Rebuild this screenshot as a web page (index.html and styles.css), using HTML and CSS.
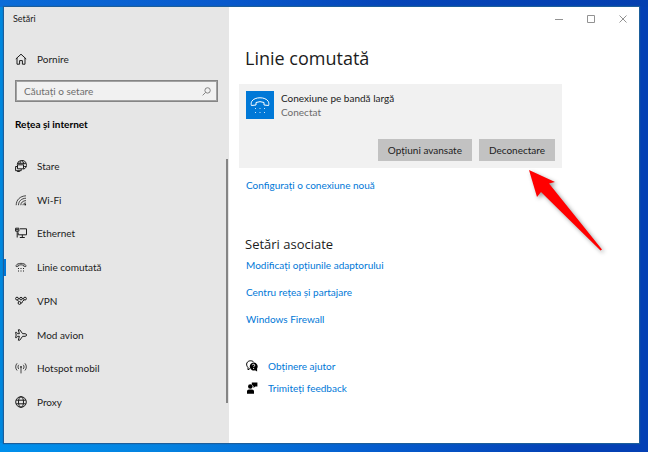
FILE: index.html
```
<!DOCTYPE html>
<html lang="ro">
<head>
<meta charset="utf-8">
<meta name="viewport" content="width=device-width, initial-scale=1">
<title>Setări</title>
<link rel="stylesheet" href="styles.css">
</head>
<body>
<div class="window">
  <aside class="sidebar">
    <div class="app-title">Setări</div>
    <a class="home" href="#">
      <svg class="icon" viewBox="0 0 12 12"><path d="M.8 6 6 1.2 11.2 6M2 5v6.2h2.6V7.6h2.8v3.6H10V5"/></svg>
      <span>Pornire</span>
    </a>
    <form class="search">
      <input type="text" aria-label="Căutați o setare" placeholder="Căutați o setare">
      <button type="submit" aria-label="Căutare"><svg class="search-icon" viewBox="0 0 10 10"><circle cx="6.2" cy="3.8" r="3"/><path d="M4 6 .7 9.3"/></svg></button>
    </form>
    <h2 class="section">Rețea și internet</h2>
    <div class="scroller">
      <nav class="nav">
        <a href="#"><svg class="icon" viewBox="0 0 12 12"><path d="M2.200 4.600A4.600 4.600 0 1 1 8.600 9.200M2.600 3.300h8.300M5 3.200C5.400 1.800 6 .8 6.700.6M8.800 4.500C8.600 2.500 7.900 1 6.700.6M9.200 6.500h1.900"/><path d="M2.500 4.800h6v4h-6zM.6 6.500v4.200h5.600V9M2.200 11.500h2.600M.6 6.500h1.900"/></svg><span>Stare</span></a>
        <a href="#"><svg class="icon thin" viewBox="0 0 12 12"><path d="M1.200 11.200C1.200 6 5 2 11 1.800M3.500 11.200C3.500 7.200 6.500 4.400 11 4.200M5.800 11.200C5.800 8.500 8 6.700 11 6.600M8 11.200C8 9.900 9.200 9 11 9"/><circle class="solid" cx="10.200" cy="10.600" r=".9"/></svg><span>Wi-Fi</span></a>
        <a href="#"><svg class="icon" viewBox="0 0 12 12"><path d="M5 1.800h6.500v6H3.200V5.500M7.300 7.800v2.500M4.800 10.500h5"/><path d="M.6 1.200h3.300v3H.6zM2.200 4.200v6.300M.8 2.700h2.800"/></svg><span>Ethernet</span></a>
        <a class="active" href="#" aria-current="page"><svg class="icon thin" viewBox="0 0 12 12"><path d="M1.200 5.600C-.2 1.300 12.200 1.300 10.800 5.600L8.700 5.200V4.200Q6 3.300 3.300 4.200v1z"/><path class="solid" d="M3 7h1v1H3zM5.500 7h1v1h-1zM8 7h1v1H8zM3 9.500h1v1H3zM5.500 9.500h1v1h-1zM8 9.500h1v1H8z"/></svg><span>Linie comutată</span></a>
        <a href="#"><svg class="icon" viewBox="0 0 12 12"><circle cx="2" cy="3.600" r="1.400"/><circle cx="6" cy="3.600" r="1.300"/><circle cx="10" cy="3.600" r="1.400"/><circle cx="4.500" cy="8" r="1.400"/><path d="M3.400 3.600h1.300M7.300 3.600h1.300M2.500 5 3.800 6.700M5.900 8C7.600 8 7.600 7 7.500 6.300L9.200 4.900"/></svg><span>VPN</span></a>
        <a href="#"><svg class="icon" viewBox="0 0 12 12"><path d="M4.400 4.700 3.300.8h1.500L7.600 4.700h2.600c1.800 0 1.800 2.600 0 2.600H7.600L4.800 11.200H3.300L4.400 7.300H2.600L1.500 8.700H.6L1.200 6 .6 3.300h.9l1.100 1.400z"/></svg><span>Mod avion</span></a>
        <a href="#"><svg class="icon thin" viewBox="0 0 12 12"><path d="M2.100 1.300C.2 3.200.2 6.600 2.100 8.500M9.900 1.300c1.900 1.900 1.900 5.300 0 7.200M3.800 2.800C2.700 4 2.700 5.900 3.800 7M8.200 2.800c1.100 1.200 1.100 3.100 0 4.200M6 5.400v6"/><circle class="solid" cx="6" cy="4.900" r=".9"/></svg><span>Hotspot mobil</span></a>
        <a href="#"><svg class="icon" viewBox="0 0 12 12"><circle cx="6" cy="6" r="5.300"/><ellipse cx="6" cy="6" rx="2.500" ry="5.300"/><path d="M1.200 4.200h9.600M1.200 7.800h9.600"/></svg><span>Proxy</span></a>
      </nav>
      <div class="thumb"></div>
    </div>
  </aside>
  <main class="content">
    <div class="controls">
      <button type="button" aria-label="Minimizare"><svg viewBox="0 0 8 8"><path d="M0 4.500h8"/></svg></button>
      <button type="button" aria-label="Maximizare"><svg viewBox="0 0 8 8"><path d="M.5.500h7v7h-7z"/></svg></button>
      <button type="button" aria-label="Închidere"><svg viewBox="0 0 8 8"><path d="m.5.500 7 7m0-7-7 7"/></svg></button>
    </div>
    <h1>Linie comutată</h1>
    <section class="card">
      <div class="connection">
        <svg class="tile" viewBox="0 0 28 28"><path d="M5.400 14.500C2.500 4.200 25.500 4.200 22.600 14.500L18 14v-2.500Q14 9.800 10 11.500V14z"/><path class="keys" d="M9 17h1v1H9zM13.500 17h1v1h-1zM18 17h1v1h-1zM9 21h1v1H9zM13.500 21h1v1h-1zM18 21h1v1h-1z"/></svg>
        <div>
          <div class="name">Conexiune pe bandă largă</div>
          <div class="status">Conectat</div>
        </div>
      </div>
      <div class="actions">
        <button type="button">Opțiuni avansate</button>
        <button type="button">Deconectare</button>
        <svg class="pointer" viewBox="0 0 76 84"><path d="M1 1 27 13 21 14.500 74 80.500 72.500 81.500 13 23 9 28z"/></svg>
      </div>
    </section>
    <a class="new-link" href="#">Configurați o conexiune nouă</a>
    <h2 class="related-title">Setări asociate</h2>
    <div class="related">
      <a href="#">Modificați opțiunile adaptorului</a>
      <a href="#">Centru rețea și partajare</a>
      <a href="#">Windows Firewall</a>
    </div>
    <div class="support">
      <a href="#"><svg class="help-icon" viewBox="0 0 12 12"><path class="outline" d="M2 9.800V7.500C-.8 4.500 1 .8 4.500.8c1.500 0 2.500.4 3.300 1.400M2 9.800l2-1.300"/><path d="M7.500 2.500a4 4 0 0 1 3.600 6v3L9 10.300a4 4 0 1 1-1.500-7.800z"/><path class="mark" d="M6.300 5.200c.2-1.400 2.600-1.200 2.400.2-.1.700-1.100.8-1.100 1.700M7.600 8v.9"/></svg><span>Obținere ajutor</span></a>
      <a href="#"><svg class="help-icon" viewBox="0 0 12 12"><circle cx="4.300" cy="4.500" r="2.300"/><path d="M1 11.800V9.300Q1 7.500 3 7.500h3q2 0 2 1.800v2.500zM5.800.4h5.600v4H9.200L7.500 6V4.200L5.800 2.500z"/></svg><span>Trimiteți feedback</span></a>
    </div>
  </main>
</div>
</body>
</html>
```
FILE: styles.css
```
* {
  box-sizing: border-box;
}

body {
  margin: 0;
  min-height: 100vh;
  display: flex;
  padding: 7px 9px 9px 4px;
  font: 10px/14px Lato, "Open Sans", sans-serif;
  color: #1c1c1c;
  background:
    linear-gradient(90deg, #0a6cd8, #0859cc 35%, #0645b8 60%, #0440b0) top / 100% 7px no-repeat,
    linear-gradient(90deg, #0090ec, #0482e0 25%, #055fd0 55%, #0440b4 88%) bottom / 100% 9px no-repeat,
    linear-gradient(90deg, #0087de 50%, #0440b4 50%);
}

a {
  color: #0078d7;
  text-decoration: none;
}

h1,
h2 {
  margin: 0;
}

button,
input {
  font: inherit;
  color: inherit;
  border: 0;
  padding: 0;
  background: none;
}

svg {
  display: block;
  flex: none;
}

.window {
  flex: 1;
  display: grid;
  grid-template-columns: 225px 1fr;
  background: #fff;
  box-shadow: 0 0 1px 1px #1b5e9c;
}

.sidebar {
  background: #e6e6e6;
}

.app-title {
  padding: 5px 9px 0;
  font-size: 9px;
}

.icon {
  width: 12px;
  height: 12px;
  fill: none;
  stroke: #1c1c1c;
}

.thin {
  stroke-width: 0.8;
}

.solid {
  fill: #1c1c1c;
  stroke: none;
}

.home {
  display: flex;
  align-items: center;
  gap: 10px;
  margin-top: 26px;
  padding-left: 11px;
  color: inherit;
}

.search {
  display: flex;
  align-items: center;
  height: 22px;
  margin: 14px 11px 0;
  padding: 0 6px;
  border: 1px solid #858585;
  outline: 1px solid #a2a2a2;
  outline-offset: -2px;
  background: #f1f1f1;
}

.search input {
  flex: 1;
  min-width: 0;
  padding-left: 2px;
  outline: 0;
}

.search input::placeholder {
  color: #6e6e6e;
  opacity: 1;
}

.search-icon {
  width: 9px;
  height: 9px;
  fill: none;
  stroke: #777;
}

.section {
  margin: 15px 11px 0;
  font-size: 10px;
  font-weight: 700;
  color: #000;
}

.scroller {
  display: flex;
  justify-content: space-between;
  margin-top: 18px;
}

.nav {
  flex: 1;
  height: 270px;
  display: grid;
  grid-auto-rows: 1fr;
}

.nav a {
  display: flex;
  align-items: center;
  gap: 10px;
  padding-left: 11px;
  color: inherit;
}

.nav .active {
  gap: 9px;
  padding-left: 0;
}

.active::before {
  content: "";
  width: 2px;
  height: 17px;
  background: #0078d7;
}

.active span {
  padding-left: 1px;
}

.thumb {
  width: 2px;
  height: 244px;
  margin: 10px 1px 0 0;
  background: #858585;
}

.content {
  display: flex;
  flex-direction: column;
  align-items: flex-start;
  padding: 0 16px;
  min-width: 0;
}

.controls {
  display: flex;
  align-self: flex-end;
  margin-right: -16px;
}

.controls button {
  width: 32px;
  height: 23px;
  display: grid;
  place-items: center;
}

.controls svg {
  width: 8px;
  height: 8px;
  fill: none;
  stroke: #929292;
}

h1 {
  margin-top: 16px;
  font-family: "Open Sans", "Noto Sans", sans-serif;
  font-size: 18px;
  font-weight: 400;
  line-height: 24px;
}

.card {
  width: calc(100% - 55px);
  margin: 14px 0 0 -6px;
  padding: 7px;
  background: #f1f1f1;
}

.connection {
  display: flex;
  gap: 7px;
}

.tile {
  width: 28px;
  height: 28px;
  background: #0078d7;
  fill: none;
  stroke: #fff;
}

.tile .keys {
  fill: #cfe6fa;
  stroke: none;
}

.status {
  color: #6b6b6b;
}

.actions {
  position: relative;
  display: flex;
  justify-content: flex-end;
  gap: 7px;
  margin-top: 20px;
}

.actions button {
  height: 22px;
  padding: 0 10px;
  background: #c2c2c2;
}

.pointer {
  position: absolute;
  top: 30px;
  right: -49px;
  width: 76px;
  height: 84px;
  overflow: visible;
  fill: #f00;
  filter: drop-shadow(2px 2px 2px #0006);
}

.new-link {
  margin: 10px 0 0 1px;
}

.related-title {
  margin-top: 43px;
  font-family: "Open Sans", "Noto Sans", sans-serif;
  font-size: 13px;
  font-weight: 400;
  line-height: 18px;
}

.related {
  display: grid;
  gap: 13px;
  margin: 5px 0 0 1px;
}

.support {
  display: grid;
  gap: 8px;
  margin: 33px 0 0 1px;
}

.support a {
  display: flex;
  align-items: center;
  gap: 10px;
}

.help-icon {
  width: 12px;
  height: 12px;
  fill: #000;
}

.outline {
  fill: none;
  stroke: #000;
}

.mark {
  fill: none;
  stroke: #fff;
}
```
